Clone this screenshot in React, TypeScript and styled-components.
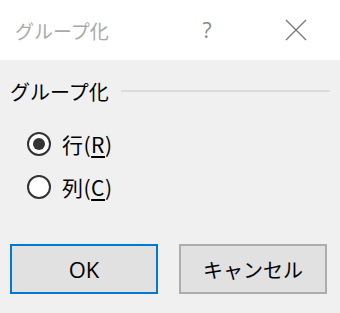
import React, { useState } from "react";
import styled, { createGlobalStyle } from "styled-components";

const GlobalStyle = createGlobalStyle`
  html, body {
    margin: 0;
    padding: 0;
    background: #f0f0f0;
  }
  body {
    font-family: "Open Sans", "Noto Sans CJK JP", sans-serif;
  }
`;

const Window = styled.div`
  width: 340px;
  height: 313px;
  background: #f0f0f0;
  display: flex;
  flex-direction: column;
`;

const TitleBar = styled.header`
  height: 60px;
  background: #ffffff;
  display: flex;
  align-items: center;
  padding-left: 15px;
  box-sizing: border-box;
`;

const Title = styled.h1`
  flex: 1;
  margin: 0;
  font-family: "Noto Sans CJK JP", sans-serif;
  font-size: 19px;
  font-weight: 400;
  color: #a9a9a9;
`;

const HelpButton = styled.span`
  width: 24px;
  margin-right: 66px;
  text-align: center;
  font-size: 21px;
  color: #8a8a8a;
`;

const CloseButton = styled.span`
  width: 22px;
  height: 22px;
  margin-right: 33px;
  display: flex;
`;

const Body = styled.main`
  padding: 19px 10px 0;
  display: flex;
  flex-direction: column;
`;

const GroupHeader = styled.div`
  height: 24px;
  display: flex;
  align-items: center;
  gap: 12px;
`;

const GroupLabel = styled.span`
  font-family: "Noto Sans CJK JP", sans-serif;
  font-size: 20px;
  color: #000;
`;

const GroupLine = styled.div`
  flex: 1;
  height: 2px;
  background: #dcdcdc;
`;

const RadioList = styled.div`
  margin-top: 19px;
  padding-left: 17px;
  display: flex;
  flex-direction: column;
`;

const RadioRow = styled.label`
  height: 43px;
  display: flex;
  align-items: center;
  gap: 11px;
  cursor: default;
`;

const RadioCircle = styled.span<{ $checked: boolean }>`
  width: 24px;
  height: 24px;
  box-sizing: border-box;
  border-radius: 50%;
  border: 2px solid #333;
  background: #fff;
  display: flex;
  align-items: center;
  justify-content: center;
  &::after {
    content: "";
    width: 12px;
    height: 12px;
    border-radius: 50%;
    background: #333;
    display: ${(p) => (p.$checked ? "block" : "none")};
  }
`;

const RadioText = styled.span`
  font-family: "Noto Sans CJK JP", sans-serif;
  font-size: 21px;
  color: #000;
  letter-spacing: 0.5px;
`;

const Key = styled.u`
  text-underline-offset: 3px;
`;

const ButtonRow = styled.footer`
  margin-top: 36px;
  display: flex;
  gap: 21px;
`;

const Button = styled.button<{ $default?: boolean; $size?: number }>`
  width: 148px;
  height: 50px;
  box-sizing: border-box;
  background: #e1e1e1;
  border: 2px solid ${(p) => (p.$default ? "#0078d7" : "#adadad")};
  font-family: "Open Sans", "Noto Sans CJK JP", sans-serif;
  font-size: ${(p) => p.$size ?? 20}px;
  color: #000;
  padding: 0;
`;

const options = [
  { id: "row", label: "行", key: "R" },
  { id: "col", label: "列", key: "C" },
];

export default function App() {
  const [selected, setSelected] = useState("row");

  return (
    <Window>
      <GlobalStyle />
      <TitleBar>
        <Title>グループ化</Title>
        <HelpButton>?</HelpButton>
        <CloseButton>
          <svg width="22" height="22" viewBox="0 0 22 22">
            <path d="M1 1 L21 21 M21 1 L1 21" stroke="#7a7a7a" strokeWidth="1.4" fill="none" />
          </svg>
        </CloseButton>
      </TitleBar>
      <Body>
        <GroupHeader>
          <GroupLabel>グループ化</GroupLabel>
          <GroupLine />
        </GroupHeader>
        <RadioList>
          {options.map((opt) => (
            <RadioRow key={opt.id} onClick={() => setSelected(opt.id)}>
              <RadioCircle $checked={selected === opt.id} />
              <RadioText>
                {opt.label}(<Key>{opt.key}</Key>)
              </RadioText>
            </RadioRow>
          ))}
        </RadioList>
        <ButtonRow>
          <Button $default $size={22}>OK</Button>
          <Button>キャンセル</Button>
        </ButtonRow>
      </Body>
    </Window>
  );
}
